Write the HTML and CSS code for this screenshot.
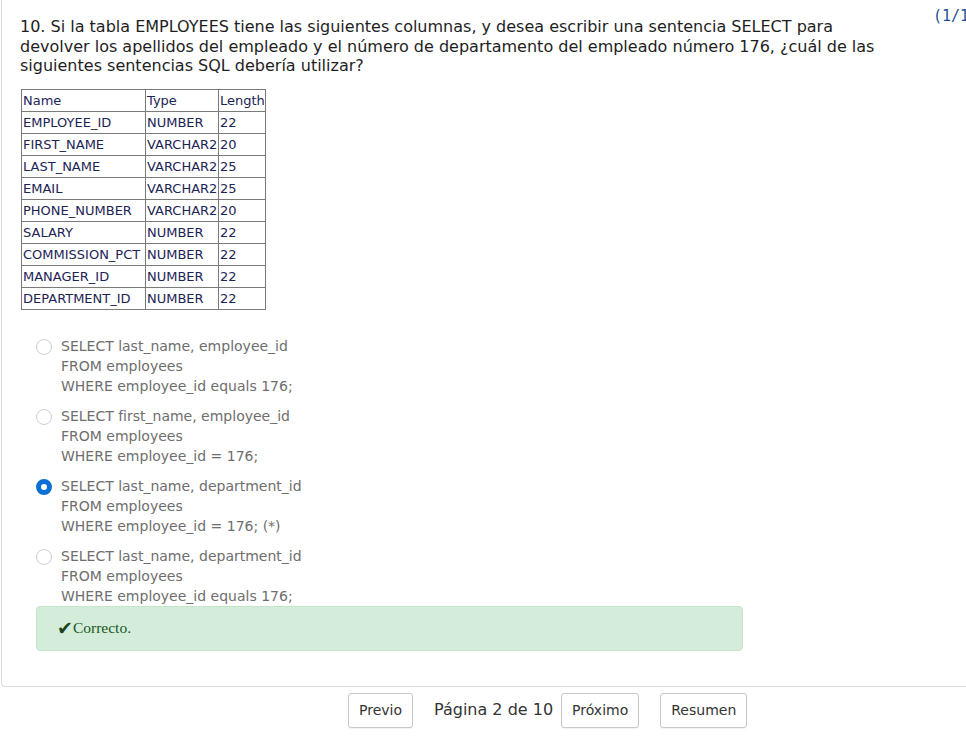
FILE: index.html
```html
<!DOCTYPE html>
<html lang="es">
<head>
<meta charset="utf-8">
<title>Pregunta 10</title>
<link rel="stylesheet" href="styles.css">
</head>
<body>
<div class="panel">
  <div class="header">
    <div class="qtext">10. Si la tabla EMPLOYEES tiene las siguientes columnas, y desea escribir una sentencia SELECT para devolver los apellidos del empleado y el número de departamento del empleado número 176, ¿cuál de las siguientes sentencias SQL debería utilizar?</div>
    <div class="score">(1/1)</div>
  </div>
  <table class="cols">
    <tr><td class="c1">Name</td><td class="c2">Type</td><td class="c3">Length</td></tr>
    <tr><td>EMPLOYEE_ID</td><td>NUMBER</td><td>22</td></tr>
    <tr><td>FIRST_NAME</td><td>VARCHAR2</td><td>20</td></tr>
    <tr><td>LAST_NAME</td><td>VARCHAR2</td><td>25</td></tr>
    <tr><td>EMAIL</td><td>VARCHAR2</td><td>25</td></tr>
    <tr><td>PHONE_NUMBER</td><td>VARCHAR2</td><td>20</td></tr>
    <tr><td>SALARY</td><td>NUMBER</td><td>22</td></tr>
    <tr><td>COMMISSION_PCT</td><td>NUMBER</td><td>22</td></tr>
    <tr><td>MANAGER_ID</td><td>NUMBER</td><td>22</td></tr>
    <tr><td>DEPARTMENT_ID</td><td>NUMBER</td><td>22</td></tr>
  </table>
  <div class="options">
    <div class="option">
      <span class="radio"></span>
      <div class="otext">SELECT last_name, employee_id<br>FROM employees<br>WHERE employee_id equals 176;</div>
    </div>
    <div class="option">
      <span class="radio"></span>
      <div class="otext">SELECT first_name, employee_id<br>FROM employees<br>WHERE employee_id = 176;</div>
    </div>
    <div class="option">
      <span class="radio checked"></span>
      <div class="otext">SELECT last_name, department_id<br>FROM employees<br>WHERE employee_id = 176; (*)</div>
    </div>
    <div class="option">
      <span class="radio"></span>
      <div class="otext">SELECT last_name, department_id<br>FROM employees<br>WHERE employee_id equals 176;</div>
    </div>
  </div>
  <div class="feedback"><span class="check">✔</span>Correcto.</div>
</div>
<div class="nav">
  <button class="btn">Previo</button>
  <span class="pageinfo">Página 2 de 10</span>
  <button class="btn btn-next">Próximo</button>
  <button class="btn btn-sum">Resumen</button>
</div>
</body>
</html>
```
FILE: styles.css
```css
html, body {
  margin: 0;
  padding: 0;
  overflow: hidden;
  background: #fff;
}

body {
  width: 966px;
  height: 738px;
  font-family: "DejaVu Sans", Verdana, sans-serif;
}

.panel {
  margin-left: 1px;
  width: 1100px;
  border-left: 1px solid #dcdcdc;
  border-bottom: 1px solid #dcdcdc;
  border-bottom-left-radius: 4px;
  padding: 7px 0 35px 18px;
}

.header {
  display: flex;
  align-items: flex-start;
}

.qtext {
  flex: 0 0 880px;
  margin-top: 10px;
  font-family: "DejaVu Sans", Verdana, sans-serif;
  font-size: 16px;
  line-height: 19.5px;
  color: #1e1e1e;
}

.score {
  margin-left: 33px;
  margin-top: 0;
  white-space: nowrap;
  font-family: "DejaVu Sans Mono", monospace;
  font-size: 15px;
  line-height: 19.5px;
  color: #1d4f91;
}

.cols {
  margin: 13px 0 0 1px;
  border-collapse: collapse;
  table-layout: fixed;
  font-family: "DejaVu Sans", Verdana, sans-serif;
  font-size: 13px;
  color: #1c2456;
}

.cols td {
  border: 1px solid #7a7a7a;
  height: 21px;
  padding: 0 0 0 1px;
  line-height: 21px;
  white-space: nowrap;
  overflow: hidden;
}

.cols .c1 { width: 122px; }
.cols .c2 { width: 71px; }
.cols .c3 { width: 45px; }

.options {
  margin: 26px 0 0 16px;
  display: flex;
  flex-direction: column;
  gap: 10px;
}

.option {
  display: flex;
  align-items: flex-start;
  gap: 9px;
}

.radio {
  flex: 0 0 16px;
  width: 16px;
  height: 16px;
  box-sizing: border-box;
  border: 1px solid #cfcfcf;
  border-radius: 50%;
  margin-top: 3px;
  background: #fff;
}

.radio.checked {
  border: 5px solid #0b70d4;
  background: #fff;
}

.otext {
  font-size: 14px;
  line-height: 20px;
  color: #6e6e6e;
}

.feedback {
  margin-left: 16px;
  width: 707px;
  height: 45px;
  box-sizing: border-box;
  display: flex;
  align-items: center;
  padding-left: 20px;
  background: #d4eddb;
  border: 1px solid #c3e6cb;
  border-radius: 4px;
  font-family: "Liberation Serif", "Times New Roman", serif;
  font-size: 15.5px;
  color: #155724;
}

.check {
  font-family: "DejaVu Sans", sans-serif;
  font-size: 19px;
  line-height: 1;
  color: #1a4420;
}

.nav {
  display: flex;
  align-items: center;
  padding-left: 348px;
  margin-top: 6px;
}

.btn {
  height: 35px;
  padding: 0 10px;
  box-sizing: border-box;
  background: #fff;
  border: 1px solid #c8c8c8;
  border-radius: 3px;
  font-family: "DejaVu Sans", Verdana, sans-serif;
  font-size: 14px;
  color: #333;
  box-shadow: 0 1px 1px rgba(0,0,0,0.05);
}

.pageinfo {
  margin: 0 8px 0 21px;
  font-family: "DejaVu Sans", Verdana, sans-serif;
  font-size: 16px;
  color: #333;
  position: relative;
  top: -1px;
}

.btn-sum {
  margin-left: 21px;
}
```
